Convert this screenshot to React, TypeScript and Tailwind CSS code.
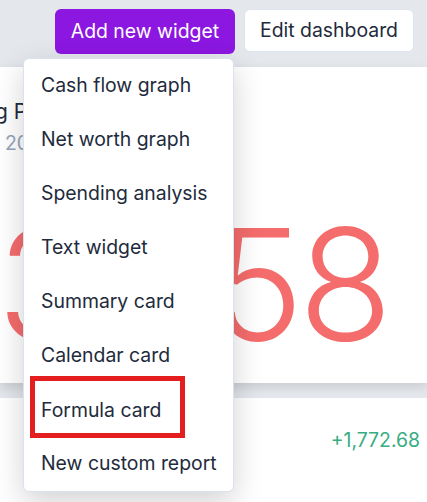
import React from "react";

const items = [
  "Cash flow graph",
  "Net worth graph",
  "Spending analysis",
  "Text widget",
  "Summary card",
  "Calendar card",
  "Formula card",
  "New custom report",
];

export default function App() {
  return (
    <div className="relative w-[427px] h-[502px] overflow-hidden bg-[#e4e7ec] font-['Inter',sans-serif] flex flex-col">
      <div className="h-[67px] flex justify-end items-start gap-[9px] pt-[9px] pr-[13px] shrink-0">
        <button className="h-[45px] px-[16px] rounded-[6px] bg-[#8b17e0] text-white text-[19.4px] leading-none">
          Add new widget
        </button>
        <button className="h-[43px] px-[15px] rounded-[6px] bg-white border border-[#dfe5ee] text-[#1e2b3c] text-[19.4px] leading-none">
          Edit dashboard
        </button>
      </div>

      <div className="h-[316px] shrink-0 bg-white shadow-[0_4px_10px_rgba(0,0,0,0.12)] flex flex-col pl-[5px] pt-[32px]">
        <div className="text-[21px] leading-[26px] text-[#1e2b3c] ml-[-10px] whitespace-nowrap">g Progress</div>
        <div className="text-[19.4px] leading-[24px] text-[#94a3b8] mt-[6px] whitespace-nowrap">2024</div>
        <div className="mt-[52px] ml-[-8px] text-[#f56c6c] font-light text-[154px] leading-[154px] tracking-[-5px] whitespace-nowrap">
          3,458
        </div>
      </div>

      <div className="h-[15px] shrink-0" />

      <div className="flex-1 bg-white flex justify-end pr-[7px] pt-[30px]">
        <span className="text-[19.4px] leading-[24px] text-[#36ad82]">+1,772.68</span>
      </div>

      <div className="absolute left-[23px] top-[58px] w-[211px] bg-white border border-[#d9e2ee] rounded-[6px] shadow-[0_10px_30px_rgba(0,0,0,0.18)] flex flex-col">
        {items.map((t) => (
          <div key={t} className="h-[54px] flex items-center pl-[17px] text-[19.4px] text-[#1e2b3c] whitespace-nowrap">
            {t === "Formula card" ? (
              <span className="ml-[-11px] mb-[6px] pl-[6px] pt-[17px] pb-[11px] leading-[24px] border-[5px] border-[#e41e1e] w-[155px]">{t}</span>
            ) : (
              t
            )}
          </div>
        ))}
      </div>
    </div>
  );
}
